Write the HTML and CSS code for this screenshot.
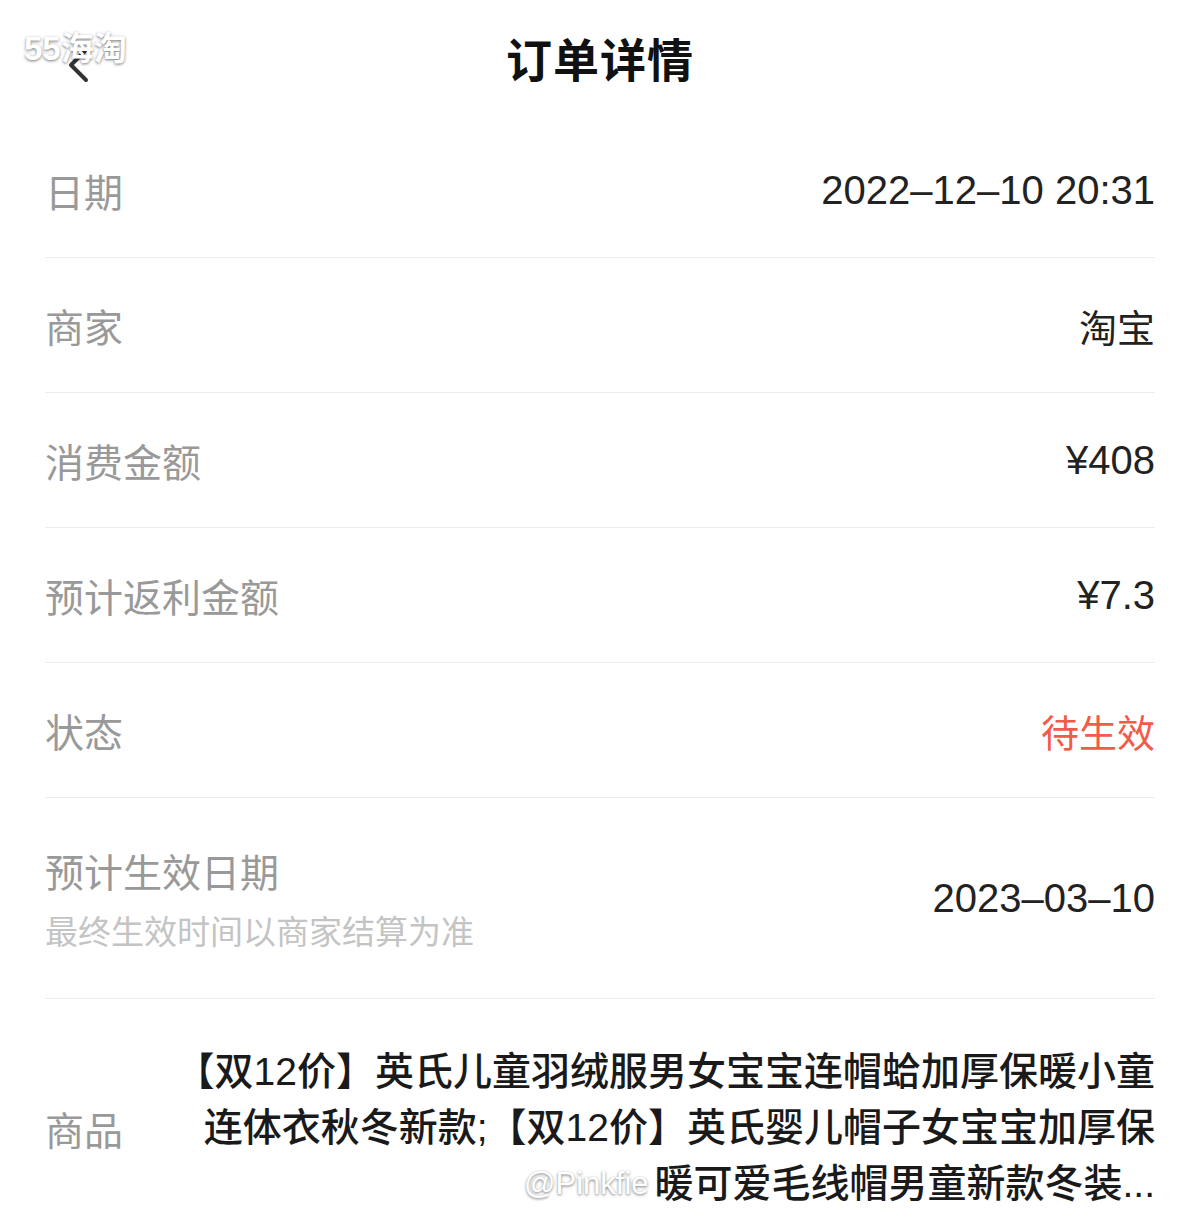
FILE: index.html
```html
<!DOCTYPE html>
<html>
<head>
  <title>订单详情</title>
  <link rel="stylesheet" href="styles.css">
</head>
<body>
  <div class="header">
    <span class="back">
      <svg width="30" height="40" viewBox="0 0 30 40">
        <path d="M24 4 L9 19 L24 34" fill="none" stroke="#333" stroke-width="4" stroke-linecap="round" stroke-linejoin="round"/>
      </svg>
    </span>
    <h1>订单详情</h1>
  </div>

  <div class="list">
    <div class="row">
      <div class="label">日期</div>
      <div class="value num">2022–12–10 20:31</div>
    </div>
    <div class="row">
      <div class="label">商家</div>
      <div class="value">淘宝</div>
    </div>
    <div class="row">
      <div class="label">消费金额</div>
      <div class="value num">¥408</div>
    </div>
    <div class="row">
      <div class="label">预计返利金额</div>
      <div class="value num">¥7.3</div>
    </div>
    <div class="row">
      <div class="label">状态</div>
      <div class="value pending">待生效</div>
    </div>
    <div class="row tall">
      <div>
        <div class="label">预计生效日期</div>
        <div class="sublabel">最终生效时间以商家结算为准</div>
      </div>
      <div class="value num">2023–03–10</div>
    </div>
    <div class="row goods">
      <div class="label">商品</div>
      <div class="value goods-text">【双12价】英氏儿童羽绒服男女宝宝连帽蛤加厚保暖小童<br>连体衣秋冬新款;【双12价】英氏婴儿帽子女宝宝加厚保<br>暖可爱毛线帽男童新款冬装...</div>
    </div>
  </div>

  <div class="mark mark-top">55海淘</div>
  <div class="mark mark-bottom">@Pinkfie</div>
</body>
</html>
```

FILE: styles.css
```css
body {
  margin: 0;
  background: #fff;
  font-family: "Liberation Sans", "Noto Sans CJK SC", sans-serif;
  color: #222;
}
.header {
  height: 123px;
  display: flex;
  align-items: center;
  justify-content: center;
  position: relative;
}
.header h1 {
  margin: 0;
  padding-bottom: 10px;
  font-size: 46px;
  font-weight: bold;
  color: #111;
  letter-spacing: 1px;
}
.back {
  position: absolute;
  left: 62px;
  top: 46px;
}
.list {
  padding: 0 45px;
}
.row {
  height: 134px;
  display: flex;
  align-items: center;
  justify-content: space-between;
  border-bottom: 1px solid #ececec;
}
.row.tall {
  height: 200px;
}
.row.goods {
  height: auto;
  padding: 45px 0 20px;
  border-bottom: none;
}
.label {
  font-size: 39px;
  color: #999;
}
.sublabel {
  font-size: 33px;
  color: #c4c4c4;
  margin-top: 8px;
}
.value {
  font-size: 38px;
  color: #222;
}
.value.num {
  font-size: 40px;
}
.pending {
  color: #f15b47;
}
.goods-text {
  text-align: right;
  line-height: 56px;
  font-size: 39px;
  font-weight: 500;
  color: #1a1a1a;
}
.mark {
  position: absolute;
  color: #fff;
  text-shadow: 0 1px 3px rgba(0,0,0,0.55);
}
.mark-top {
  left: 24px;
  top: 22px;
  font-size: 33px;
  font-weight: bold;
}
.mark-bottom {
  left: 524px;
  top: 1166px;
  font-size: 31px;
}
```
